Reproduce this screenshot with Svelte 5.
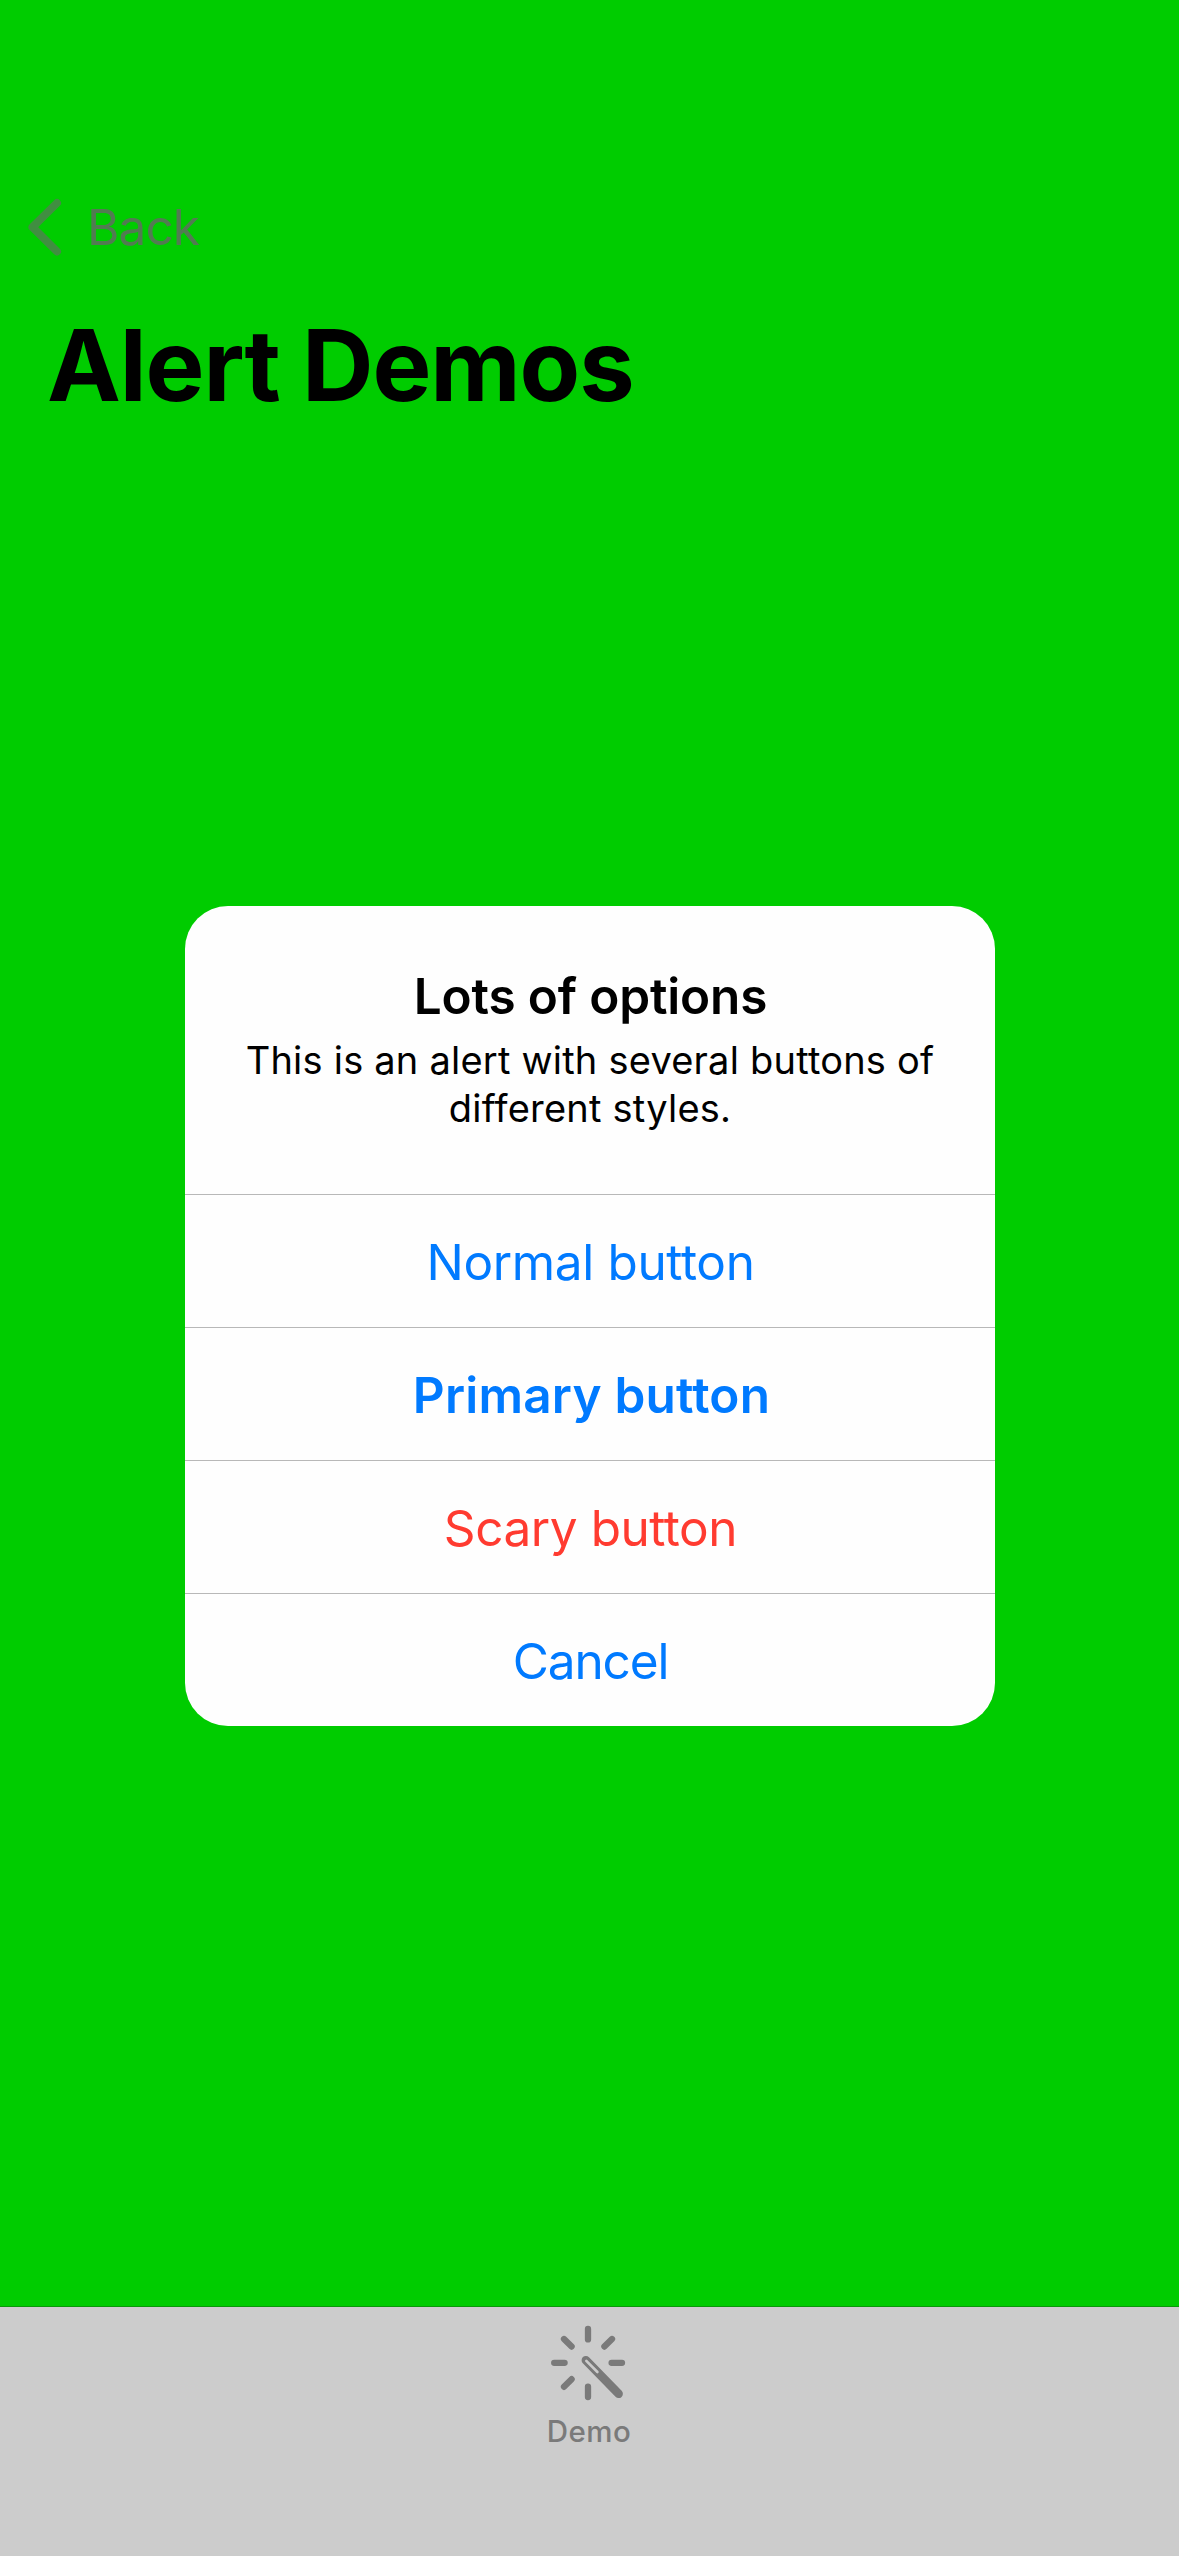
<script>
  const actions = [
    { label: 'Normal button', kind: 'normal' },
    { label: 'Primary button', kind: 'primary' },
    { label: 'Scary button', kind: 'scary' },
    { label: 'Cancel', kind: 'cancel' }
  ];
</script>

<div class="screen">
  <header>
    <div class="back">
      <svg width="37" height="60" viewBox="0 0 37 60" aria-hidden="true">
        <path d="M32 6 7.5 30.2 32 54.5" />
      </svg>
      <span>Back</span>
    </div>
    <h1>Alert Demos</h1>
  </header>

  <main>
    <div class="alert" role="alertdialog">
      <div class="message">
        <h2>Lots of options</h2>
        <p>This is an alert with several buttons of<br />different styles.</p>
      </div>
      {#each actions as action}
        <button class={action.kind}>{action.label}</button>
      {/each}
    </div>
  </main>

  <nav>
    <svg width="80" height="80" viewBox="0 0 80 80" aria-hidden="true">
      <g class="rays">
        <path d="M40 7v10.4M40 64.6v10.4M6.2 40.8h10.4M63.6 40.8h10.4" />
        <path d="M16 17l7.6 7.6M64 17l-7.6 7.6M16 64.8l7.6-7.6" />
      </g>
      <path class="wand" d="M37.9 38.2 70.6 71.8" />
      <path class="tip" d="M38.3 38.8 49.4 50" />
    </svg>
    <span class="tab">Demo</span>
  </nav>
</div>

<style>
  :global(body) {
    margin: 0;
  }
  .screen {
    width: 1179px;
    height: 2556px;
    display: flex;
    flex-direction: column;
    background: #00cf00;
    background: #00cc00;
    font-family: Inter, 'Liberation Sans', sans-serif;
    color: #000;
    overflow: hidden;
  }
  header {
    height: 906px;
    box-sizing: border-box;
    padding-top: 197px;
  }
  .back {
    display: flex;
    align-items: center;
    height: 60px;
    padding-left: 25px;
    gap: 25px;
    font-size: 49.5px;
    letter-spacing: -0.9px;
    color: #527b52;
  }
  .back svg {
    fill: none;
    stroke: #418e41;
    stroke-width: 8;
    stroke-linecap: round;
    stroke-linejoin: round;
  }
  h1 {
    margin: 48px 0 0 47px;
    font-size: 99px;
    line-height: 120px;
    font-weight: 700;
    letter-spacing: -1.1px;
  }
  main {
    display: flex;
    justify-content: center;
    height: 1400px;
    padding-left: 1px;
  }
  .alert {
    width: 810px;
    height: 820px;
    border-radius: 43px;
    background: #fefefe;
    overflow: hidden;
  }
  .message {
    height: 288px;
    box-sizing: border-box;
    padding-top: 60px;
    text-align: center;
  }
  h2 {
    margin: 0;
    padding-left: 1px;
    font-size: 49.5px;
    line-height: 60px;
    font-weight: 600;
    letter-spacing: -0.15px;
  }
  p {
    margin: 10px 0 0;
    font-size: 38px;
    line-height: 48px;
    letter-spacing: 0.22px;
  }
  button {
    display: block;
    width: 100%;
    height: 133px;
    padding: 2px 0 0 1px;
    border: 0;
    border-top: 1px solid #b8b8b8;
    background: none;
    font: 400 49.5px/130px Inter, 'Liberation Sans', sans-serif;
    letter-spacing: -0.35px;
    text-align: center;
    color: #007aff;
  }
  .primary {
    padding-left: 3px;
    font-weight: 600;
    letter-spacing: 0.2px;
  }
  .scary {
    color: #ff3b30;
    letter-spacing: -0.45px;
  }
  .cancel {
    letter-spacing: -1.1px;
  }
  nav {
    flex: 1;
    display: flex;
    flex-direction: column;
    align-items: center;
    padding-top: 15px;
    border-top: 1px solid #0a970a;
    background: #ccc;
    color: #7a7a7a;
  }
  nav svg {
    margin-right: 3px;
    fill: none;
    stroke: #7a7a7a;
    stroke-linecap: round;
  }
  .rays {
    stroke-width: 6.3;
  }
  .wand {
    stroke-width: 8.6;
  }
  .tip {
    stroke: #ccc;
    stroke-width: 2.6;
  }
  .tab {
    margin: 11px 1px 0 0;
    font-size: 29.5px;
    line-height: 36px;
    font-weight: 500;
    letter-spacing: 0.5px;
  }
</style>
